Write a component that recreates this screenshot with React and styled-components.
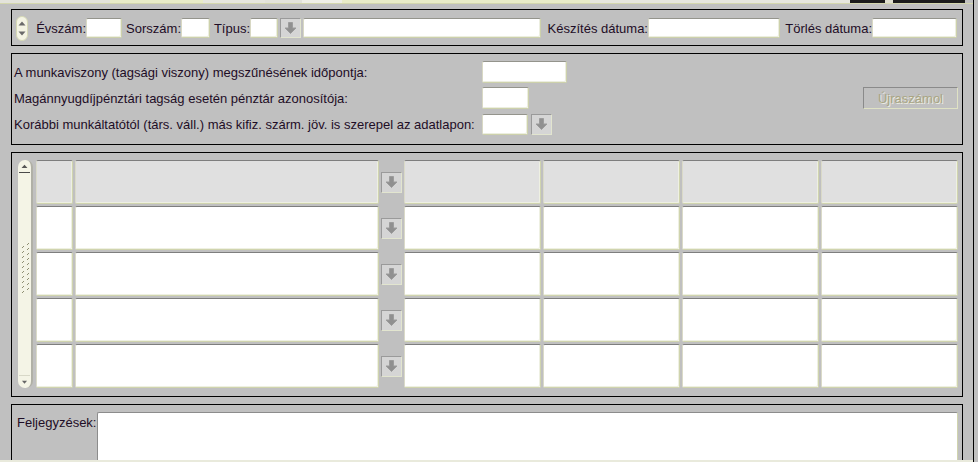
import styled, { createGlobalStyle } from 'styled-components';

const GlobalStyle = createGlobalStyle`
  * { box-sizing: border-box; }
  html, body { margin: 0; padding: 0; background: #c0c0c0; }
  body {
    font-family: 'Liberation Sans', Arial, sans-serif;
    font-size: 13px;
    color: #1e0d26;
    overflow: hidden;
  }
`;

// bottoms of the fields of the block above, cut off by the window
const topSegments = [
  [110, '#e3e3db'], [93, '#e9ecc8'], [62, '#e6e6de'], [37, '#e3e3db'],
  [40, '#efefe7'], [248, '#e9ecc8'], [260, '#e6e6de'], [35, '#1c1c1c'],
  [8, '#dedece'], [72, '#1c1c1c'],
];

const columns = [37, 304, 21, 137, 137, 137, 137];
const rows = [0, 1, 2, 3, 4];

function DownArrow() {
  return (
    <svg width="13" height="12" viewBox="0 0 13 12">
      <path d="M4.5 0.5h4v5.5h3.5l-5.5 5.5-5.5-5.5h3.5z" fill="#909090" stroke="#9c9c9c" strokeWidth="1" />
    </svg>
  );
}

function Spinner() {
  return (
    <SpinnerBox>
      <svg width="12" height="25" viewBox="0 0 12 25">
        <rect x="0.5" y="0.5" width="11" height="24" rx="5.5" fill="#f4f4e4" stroke="#d6d9b6" />
        <path d="M2.5 9.5h7l-3.5-4z" fill="#6a6a6a" />
        <path d="M2.5 15.5h7l-3.5 4z" fill="#6a6a6a" />
      </svg>
    </SpinnerBox>
  );
}

function Grip() {
  const ticks = [];
  for (let i = 0; i < 10; i += 1) {
    ticks.push(<path key={`a${i}`} d={`M4 ${7 + i * 5}l2 -2`} />);
    ticks.push(<path key={`b${i}`} d={`M9 ${4 + i * 5}l2 -2`} />);
  }
  return (
    <svg width="13" height="52" viewBox="0 0 13 52">
      <g stroke="#8e8e72" strokeWidth="1">{ticks}</g>
    </svg>
  );
}

function Scrollbar() {
  return (
    <ScrollTrack>
      <ScrollCap>
        <svg width="13" height="12" viewBox="0 0 13 12">
          <path d="M3 8.5h7l-3.5-4z" fill="#555" />
        </svg>
      </ScrollCap>
      <GripSlot>
        <Grip />
      </GripSlot>
      <ScrollCap $bottom>
        <svg width="13" height="12" viewBox="0 0 13 12">
          <path d="M3.5 4.5h6l-3 3.5z" fill="#666" />
        </svg>
      </ScrollCap>
    </ScrollTrack>
  );
}

export default function App() {
  return (
    <>
      <GlobalStyle />
      <Screen>
        <TopStrip>
          {topSegments.map(([w, c], i) => (
            <TopSegment key={i} $w={w} $c={c} />
          ))}
        </TopStrip>

        <Frame>
          <HeaderPanel $h={37}>
            <Spinner />
            <Label $w={58} $align="right">Évszám:</Label>
            <Field $w={36} />
            <Label $w={59} $align="right">Sorszám:</Label>
            <Field $w={29} />
            <Label $w={40} $align="right">Típus:</Label>
            <Field $w={28} />
            <DropButton $ml={2}>
              <DownArrow />
            </DropButton>
            <Field $w={238} $ml={2} />
            <Label $w={107} $align="right">Készítés dátuma:</Label>
            <Field $w={132} />
            <Label $w={92} $align="right">Törlés dátuma:</Label>
            <Field $w={85} />
          </HeaderPanel>

          <InfoPanel $h={92}>
            <InfoLabel>A munkaviszony (tagsági viszony) megszűnésének időpontja:</InfoLabel>
            <FieldGroup>
              <Field $w={85} $h={22} />
            </FieldGroup>
            <InfoLabel>Magánnyugdíjpénztári tagság esetén pénztár azonosítója:</InfoLabel>
            <FieldGroup>
              <Field $w={47} $h={22} />
            </FieldGroup>
            <RecalcButton>Újraszámol</RecalcButton>
            <InfoLabel>Korábbi munkáltatótól (társ. váll.) más kifiz. szárm. jöv. is szerepel az adatlapon:</InfoLabel>
            <FieldGroup>
              <Field $w={46} $h={21} />
              <DropButton $h={21}>
                <DownArrow />
              </DropButton>
            </FieldGroup>
          </InfoPanel>

          <ListPanel $h={245}>
            <Scrollbar />
            <Grid>
              {rows.map((r) =>
                columns.map((w, c) =>
                  c === 2 ? (
                    <ButtonSlot key={`${r}-${c}`}>
                      <DropButton $h={21}>
                        <DownArrow />
                      </DropButton>
                    </ButtonSlot>
                  ) : (
                    <Cell key={`${r}-${c}`} $header={r === 0} />
                  )
                )
              )}
            </Grid>
          </ListPanel>

          <NotesPanel $h={80}>
            <NotesLabel>Feljegyzések:</NotesLabel>
            <NoteArea />
          </NotesPanel>
        </Frame>

        <BottomEdge />
      </Screen>
    </>
  );
}

const Screen = styled.div`
  position: relative;
  width: 974px;
  height: 462px;
  border-right: 1px solid #000;
  overflow: hidden;
`;

const TopStrip = styled.div`
  display: flex;
  height: 4px;
  border-bottom: 1px solid #d4d7ae;
`;

const TopSegment = styled.div`
  width: ${(props) => props.$w}px;
  height: 3px;
  flex-shrink: 0;
  background: ${(props) => props.$c};
`;

const Frame = styled.div`
  display: flex;
  flex-direction: column;
  gap: 7px;
  width: 952px;
  margin: 5px 0 0 11px;
`;

const Panel = styled.div`
  flex-shrink: 0;
  height: ${(props) => props.$h}px;
  border: 1px solid #000;
`;

const HeaderPanel = styled(Panel)`
  display: flex;
  align-items: center;
  padding: 1px 5px 0 4px;
`;

const SpinnerBox = styled.div`
  display: flex;
  width: 12px;
  height: 25px;
  flex-shrink: 0;
`;

const Label = styled.span`
  width: ${(props) => props.$w}px;
  flex-shrink: 0;
  text-align: ${(props) => props.$align || 'left'};
  white-space: nowrap;
  line-height: 15px;
`;

const Field = styled.div`
  width: ${(props) => props.$w}px;
  height: ${(props) => props.$h || 20}px;
  flex-shrink: 0;
  margin-left: ${(props) => props.$ml || 0}px;
  background: #fff;
  border: 1px solid;
  border-color: #94948c #cdd1ab #cdd1ab #d8d8c4;
  border-radius: 2px;
  box-shadow: inset -1px -1px 0 #eceee0;
`;

const DropButton = styled.div`
  display: flex;
  align-items: center;
  justify-content: center;
  width: 21px;
  height: ${(props) => props.$h || 20}px;
  flex-shrink: 0;
  margin-left: ${(props) => props.$ml || 0}px;
  background: #d5d5d5;
  border: 1px solid;
  border-color: #9a9a9a #e2e5cf #e2e5cf #9a9a9a;
`;

const InfoPanel = styled(Panel)`
  display: grid;
  grid-template-columns: 468px 1fr auto;
  grid-auto-rows: 22px;
  row-gap: 4px;
  align-items: center;
  padding: 7px 4px 0 2px;
`;

const InfoLabel = styled.span`
  grid-column: 1;
  white-space: nowrap;
  line-height: 15px;
`;

const FieldGroup = styled.div`
  display: flex;
  align-items: center;
  gap: 3px;
`;

const RecalcButton = styled.div`
  display: flex;
  align-items: center;
  justify-content: center;
  width: 95px;
  height: 22px;
  border: 1px solid;
  border-color: #8a8a8a #dfe2c4 #dfe2c4 #8a8a8a;
  color: #a9a583;
  text-shadow: 1px 1px 0 #ecece0;
`;

const ListPanel = styled(Panel)`
  display: flex;
  gap: 3px;
  padding: 7px 4px 0 6px;
`;

const ScrollTrack = styled.div`
  display: flex;
  flex-direction: column;
  width: 15px;
  height: 228px;
  flex-shrink: 0;
  background: #f4f4e6;
  border-right: 2px solid #b0b0a6;
  border-radius: 7px;
`;

const ScrollCap = styled.div`
  display: flex;
  align-items: center;
  justify-content: center;
  height: 13px;
  flex-shrink: 0;
  margin: ${(props) => (props.$bottom ? 'auto 1px 0 1px' : '0 1px')};
  border-top: ${(props) => (props.$bottom ? '1px solid #d8d8c8' : 'none')};
  border-bottom: ${(props) => (props.$bottom ? 'none' : '1px solid #4a4a4a')};
`;

const GripSlot = styled.div`
  display: flex;
  margin-top: 68px;
`;

const Grid = styled.div`
  display: grid;
  grid-template-columns: ${columns.map((w) => `${w}px`).join(' ')};
  grid-template-rows: repeat(5, 44px);
  gap: 2px;
`;

const Cell = styled.div`
  background: ${(props) => (props.$header ? '#e0e0e0' : '#fff')};
  border: 1px solid;
  border-color: #7e7e7e #d0d4ae #d0d4ae #dadac8;
  border-radius: 2px;
  box-shadow: inset -1px -1px 0 #eef0e2;
`;

const ButtonSlot = styled.div`
  display: flex;
  align-items: center;
  justify-content: center;
`;

const NotesPanel = styled(Panel)`
  display: flex;
  padding: 7px 4px 0 5px;
`;

const NotesLabel = styled.span`
  width: 80px;
  flex-shrink: 0;
  padding-top: 3px;
  line-height: 15px;
  white-space: nowrap;
`;

const NoteArea = styled.div`
  width: 861px;
  height: 64px;
  background: #fff;
  border: 1px solid;
  border-color: #8c8c8c #d0d4ae #d0d4ae #8c8c8c;
  border-radius: 2px;
`;

const BottomEdge = styled.div`
  position: absolute;
  left: 0;
  right: 0;
  bottom: 0;
  height: 2px;
  background: #e9eadc;
`;
